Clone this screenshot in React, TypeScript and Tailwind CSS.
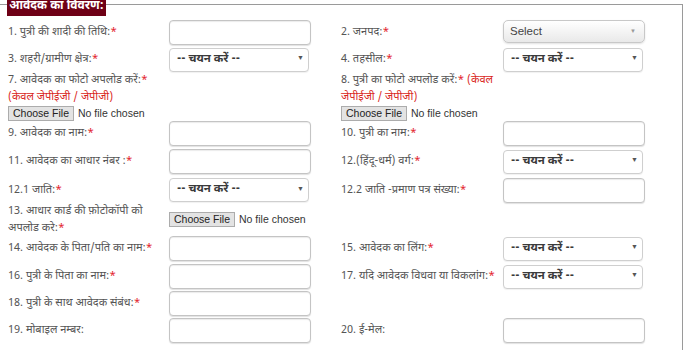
import React from "react";

const FONT = { fontFamily: '"Noto Sans Devanagari", "Lohit Devanagari", "Mangal", "Noto Sans", "Open Sans", sans-serif' };

function Star() {
  return <span className="text-[#e3262e]">*</span>;
}

function Label({ children, w = "w-[161px]" }: { children: React.ReactNode; w?: string }) {
  return <div className={`${w} shrink-0 text-[11px] leading-[17px] text-[#555]`}>{children}</div>;
}

function TextInput() {
  return (
    <div className="w-[142px] h-[25px] shrink-0 rounded-[4px] border border-[#c4c4c4] bg-white shadow-[inset_0_1px_1px_rgba(0,0,0,0.08),0_1px_1px_rgba(0,0,0,0.12)]" />
  );
}

function Select() {
  return (
    <div className="w-[140px] h-[24px] shrink-0 rounded-[4px] border border-[#cfcfcf] bg-white flex items-center justify-between pl-[7px] pr-[4px] shadow-[0_1px_1px_rgba(0,0,0,0.06)]">
      <span className="text-[11.5px] font-bold text-[#3a3a3a]">-- चयन करें --</span>
      <span className="text-[7px] text-[#555]">▼</span>
    </div>
  );
}

function FileBtn() {
  return (
    <div className="flex items-center h-[15px]" style={{ fontFamily: '"Liberation Sans", Arial, sans-serif' }}>
      <span className="h-[15px] px-[4px] flex items-center border border-[#acacac] bg-[#e3e3e3] text-[10.5px] text-[#222] leading-none">
        Choose File
      </span>
      <span className="ml-[4px] text-[10.5px] text-[#333]">No file chosen</span>
    </div>
  );
}

function Half({ children, w = "w-[333px]" }: { children?: React.ReactNode; w?: string }) {
  return <div className={`${w} shrink-0 flex items-center`}>{children}</div>;
}

function Row({ children, className = "" }: { children: React.ReactNode; className?: string }) {
  return <div className={`flex ${className}`}>{children}</div>;
}

export default function App() {
  return (
    <div className="w-[685px] h-[350px] overflow-hidden bg-white" style={FONT}>
      <div className="relative mt-[4px] mr-[2px] h-[400px] border-t border-r border-[#9a9a9a]">
        <div className="absolute left-[7px] top-[-12px] w-[99px] h-[23px] bg-[#6e0016] flex items-end justify-center pb-[4px]">
          <span className="text-white text-[12px] font-bold leading-none">आवेदक का विवरण:</span>
        </div>
        <div className="pl-[8px] pt-[15px] flex flex-col">
          <Row className="h-[25px]">
            <Half>
              <Label>1. पुत्री की शादी की तिथि:<Star /></Label>
              <TextInput />
            </Half>
            <Half>
              <Label w="w-[162px]">2. जनपद:<Star /></Label>
              <div
                className="w-[142px] h-[23px] self-start rounded-[5px] border border-[#c8c8c8] bg-gradient-to-b from-white to-[#e9e9e9] flex items-center justify-between pl-[6px] pr-[8px] shadow-[0_1px_2px_rgba(0,0,0,0.12)]"
                style={{ fontFamily: '"Liberation Sans", Arial, sans-serif' }}
              >
                <span className="text-[11.5px] text-[#444]">Select</span>
                <span className="text-[6px] text-[#999]">▼</span>
              </div>
            </Half>
          </Row>
          <Row className="h-[25px] mt-[2px]">
            <Half>
              <Label>3. शहरी/ग्रामीण क्षेत्र:<Star /></Label>
              <Select />
            </Half>
            <Half>
              <Label w="w-[162px]">4. तहसील:<Star /></Label>
              <Select />
            </Half>
          </Row>
          <Row className="h-[49px]">
            <div className="w-[333px] shrink-0 flex flex-col">
              <div className="text-[11px] leading-[17px] text-[#555]">
                7. आवेदक का फोटो अपलोड करें:<Star />
                <br />
                <span className="text-[#d9261c]">(केवल जेपीईजी / जेपीजी)</span>
              </div>
              <FileBtn />
            </div>
            <div className="w-[333px] shrink-0 flex flex-col">
              <div className="text-[11px] leading-[17px] text-[#555]">
                8. पुत्री का फोटो अपलोड करें:<Star /> <span className="text-[#d9261c]">(केवल</span>
                <br />
                <span className="text-[#d9261c]">जेपीईजी / जेपीजी)</span>
              </div>
              <FileBtn />
            </div>
          </Row>
          <Row className="h-[25px]">
            <Half>
              <Label>9. आवेदक का नाम:<Star /></Label>
              <TextInput />
            </Half>
            <Half>
              <Label w="w-[162px]">10. पुत्री का नाम:<Star /></Label>
              <TextInput />
            </Half>
          </Row>
          <Row className="h-[25px] mt-[3px]">
            <Half>
              <Label>11. आवेदक का आधार नंबर :<Star /></Label>
              <TextInput />
            </Half>
            <Half>
              <Label w="w-[162px]">12.(हिंदू-धर्म) वर्ग:<Star /></Label>
              <Select />
            </Half>
          </Row>
          <Row className="h-[26px] mt-[3px]">
            <Half>
              <Label>12.1 जाति:<Star /></Label>
              <Select />
            </Half>
            <Half>
              <Label w="w-[162px]">12.2 जाति -प्रमाण पत्र संख्या:<Star /></Label>
              <TextInput />
            </Half>
          </Row>
          <Row className="h-[33px]">
            <Half>
              <Label>
                <div className="leading-[16.5px]">
                  13. आधार कार्ड की फ़ोटोकॉपी को
                  <br />
                  अपलोड करे:<Star />
                </div>
              </Label>
              <FileBtn />
            </Half>
            <Half />
          </Row>
          <Row className="h-[25px]">
            <Half>
              <Label>14. आवेदक के पिता/पति का नाम:<Star /></Label>
              <TextInput />
            </Half>
            <Half>
              <Label w="w-[162px]">15. आवेदक का लिंग:<Star /></Label>
              <Select />
            </Half>
          </Row>
          <Row className="h-[25px] mt-[3px]">
            <Half>
              <Label>16. पुत्री के पिता का नाम:<Star /></Label>
              <TextInput />
            </Half>
            <Half>
              <Label w="w-[162px]">17. यदि आवेदक विधवा या विकलांग:<Star /></Label>
              <Select />
            </Half>
          </Row>
          <Row className="h-[25px] mt-[2px]">
            <Half>
              <Label>18. पुत्री के साथ आवेदक संबंध:<Star /></Label>
              <TextInput />
            </Half>
            <Half />
          </Row>
          <Row className="h-[25px] mt-[2px]">
            <Half>
              <Label>19. मोबाइल नम्बर:</Label>
              <TextInput />
            </Half>
            <Half>
              <Label w="w-[162px]">20. ई-मेल:</Label>
              <TextInput />
            </Half>
          </Row>
        </div>
      </div>
    </div>
  );
}
